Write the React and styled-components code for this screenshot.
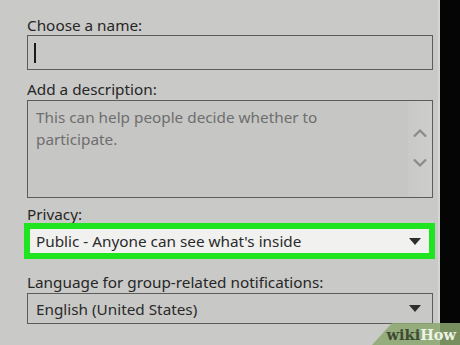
import styled, { createGlobalStyle, css } from 'styled-components';

const GlobalStyle = createGlobalStyle`
  html, body {
    margin: 0;
    padding: 0;
    background: #000;
  }
  body {
    font-family: "Noto Sans", "Open Sans", sans-serif;
  }
`;

const Screen = styled.div`
  position: relative;
  display: flex;
  width: 460px;
  height: 345px;
  overflow: hidden;
  background: #050505;
`;

const Panel = styled.div`
  box-sizing: border-box;
  width: 440px;
  height: 100%;
  padding: 16px 5px 0 27px;
  background: #c9c9c7;
  border-right: 2px solid #d6d6d4;
  display: flex;
  flex-direction: column;
`;

const Field = styled.div`
  display: flex;
  flex-direction: column;
  margin-top: ${({ gap }) => gap || 0}px;
`;

const Label = styled.label`
  font-size: 15.3px;
  line-height: 18px;
  color: #262626;
  margin-bottom: ${({ space }) => space || 0}px;
`;

const TextBox = styled.div`
  box-sizing: border-box;
  width: 406px;
  height: ${({ h }) => h}px;
  border: 1.5px solid #5c5c5c;
  background: #c8c8c6;
  display: flex;
  align-items: center;
  padding-left: 6px;
`;

const Caret = styled.span`
  width: 2px;
  height: 20px;
  background: #1a1a1a;
`;

const AreaBox = styled.div`
  box-sizing: border-box;
  width: 406px;
  height: 98px;
  border: 1.5px solid #5c5c5c;
  background: #c6c6c4;
  display: flex;
`;

const AreaText = styled.div`
  flex: 1;
  padding: 5px 0 0 8px;
  font-size: 15.3px;
  line-height: 22px;
  color: #6e6e6e;
`;

const ScrollTrack = styled.div`
  width: 24px;
  background: linear-gradient(90deg, #c9c9c7, #cdcdcb);
  display: flex;
  flex-direction: column;
  align-items: center;
  padding-top: 27px;
  gap: 20px;
`;

const Chevron = styled.svg`
  width: 16px;
  height: 10px;
`;

const Select = styled.div`
  box-sizing: border-box;
  display: flex;
  align-items: center;
  justify-content: space-between;
  font-size: 15.3px;
  color: #2a2a2a;
  ${({ highlighted }) =>
    highlighted
      ? css`
          width: 411px;
          height: 36px;
          margin-left: -3px;
          border: 6px solid #1fe41f;
          background: #f1f1ef;
          padding: 0 8px 0 6px;
        `
      : css`
          width: 406px;
          height: 31px;
          border: 1.5px solid #5c5c5c;
          background: #c8c8c6;
          padding: 0 11px 0 8px;
        `}
`;

const Arrow = styled.span`
  width: 0;
  height: 0;
  border-left: 6px solid transparent;
  border-right: 6px solid transparent;
  border-top: 7px solid #2e2e2e;
`;

const Watermark = styled.div`
  position: absolute;
  right: 0;
  bottom: 0;
  width: 88px;
  height: 22px;
  background: rgba(140, 168, 110, 0.85);
  clip-path: polygon(20px 0, 100% 0, 100% 100%, 0 100%);
  display: flex;
  align-items: center;
  justify-content: flex-end;
  padding-right: 4px;
  box-sizing: border-box;
  font-family: "DejaVu Serif", "Liberation Serif", serif;
  font-weight: bold;
  font-size: 14.5px;
`;

const Wiki = styled.span`
  color: #3f4a33;
`;

const How = styled.span`
  color: #eef3e6;
`;

export default function App() {
  return (
    <Screen>
      <GlobalStyle />
      <Panel>
        <Field>
          <Label space={1}>Choose a name:</Label>
          <TextBox h={35}>
            <Caret />
          </TextBox>
        </Field>
        <Field gap={10}>
          <Label space={2}>Add a description:</Label>
          <AreaBox>
            <AreaText>
              This can help people decide whether to
              <br />
              participate.
            </AreaText>
            <ScrollTrack>
              <Chevron viewBox="0 0 16 10">
                <path d="M2 8.5 L8 2.5 L14 8.5" fill="none" stroke="#8a8a8a" strokeWidth="2.2" />
              </Chevron>
              <Chevron viewBox="0 0 16 10">
                <path d="M2 1.5 L8 7.5 L14 1.5" fill="none" stroke="#8a8a8a" strokeWidth="2.2" />
              </Chevron>
            </ScrollTrack>
          </AreaBox>
        </Field>
        <Field gap={7}>
          <Label>Privacy:</Label>
          <Select highlighted>
            <span>Public - Anyone can see what's inside</span>
            <Arrow />
          </Select>
        </Field>
        <Field gap={14}>
          <Label space={2}>Language for group-related notifications:</Label>
          <Select>
            <span>English (United States)</span>
            <Arrow />
          </Select>
        </Field>
      </Panel>
      <Watermark>
        <Wiki>wiki</Wiki>
        <How>How</How>
      </Watermark>
    </Screen>
  );
}
